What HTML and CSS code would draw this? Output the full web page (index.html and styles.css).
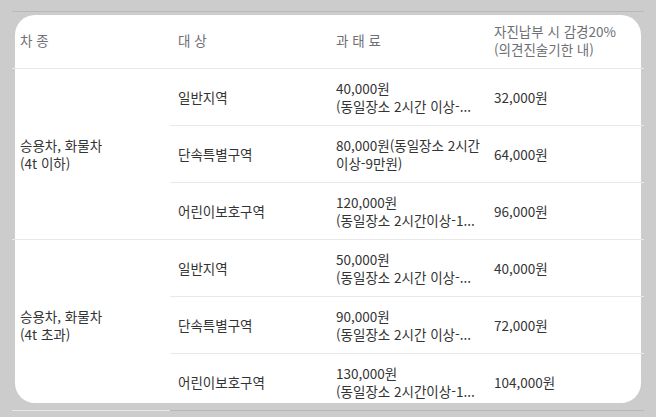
FILE: index.html
```html
<!DOCTYPE html>
<html lang="ko">
<head>
<meta charset="utf-8">
<link rel="stylesheet" href="styles.css">
</head>
<body>
<div class="sheet">
  <div class="card"></div>
  <table class="fines">
    <colgroup><col><col><col><col></colgroup>
    <thead>
      <tr>
        <th>차 종</th>
        <th>대 상</th>
        <th>과 태 료</th>
        <th>자진납부 시 감경20%<br>(의견진술기한 내)</th>
      </tr>
    </thead>
    <tbody>
      <tr class="group">
        <td rowspan="3">승용차, 화물차<br>(4t 이하)</td>
        <td>일반지역</td>
        <td>40,000원<br>(동일장소 2시간 이상-...</td>
        <td>32,000원</td>
      </tr>
      <tr>
        <td>단속특별구역</td>
        <td>80,000원(동일장소 2시간<br>이상-9만원)</td>
        <td>64,000원</td>
      </tr>
      <tr>
        <td>어린이보호구역</td>
        <td>120,000원<br>(동일장소 2시간이상-1...</td>
        <td>96,000원</td>
      </tr>
      <tr class="group">
        <td rowspan="3">승용차, 화물차<br>(4t 초과)</td>
        <td>일반지역</td>
        <td>50,000원<br>(동일장소 2시간 이상-...</td>
        <td>40,000원</td>
      </tr>
      <tr>
        <td>단속특별구역</td>
        <td>90,000원<br>(동일장소 2시간 이상-...</td>
        <td>72,000원</td>
      </tr>
      <tr>
        <td>어린이보호구역</td>
        <td>130,000원<br>(동일장소 2시간이상-1...</td>
        <td>104,000원</td>
      </tr>
    </tbody>
  </table>
</div>
</body>
</html>
```

FILE: styles.css
```css
html, body {
  margin: 0;
  padding: 0;
  background: #cccccc;
}

body {
  font-family: "Noto Sans CJK KR", "Noto Sans", sans-serif;
  font-size: 13.5px;
  color: #333333;
  overflow: hidden;
}

.sheet {
  position: relative;
  width: 632px;
  margin: 11px 0 0 12px;
}

.card {
  position: absolute;
  top: 4px;
  left: 3px;
  right: 3px;
  bottom: 8px;
  background: #ffffff;
  border-radius: 20px;
}

.fines {
  position: relative;
  width: 632px;
  table-layout: fixed;
  border-collapse: collapse;
  border-top: 1px solid #b8b8b8;
  border-bottom: 1px solid #b8b8b8;
}

.fines col {
  width: 158px;
}

.fines th,
.fines td {
  height: 56px;
  padding: 0 8px;
  text-align: left;
  vertical-align: middle;
  line-height: 18px;
  white-space: nowrap;
  border-bottom: 1px solid #e8e8e8;
}

.fines th {
  font-weight: normal;
  color: #6f6f76;
}

.fines tbody tr:last-child td {
  border-bottom: 1px solid #b8b8b8;
}
```
